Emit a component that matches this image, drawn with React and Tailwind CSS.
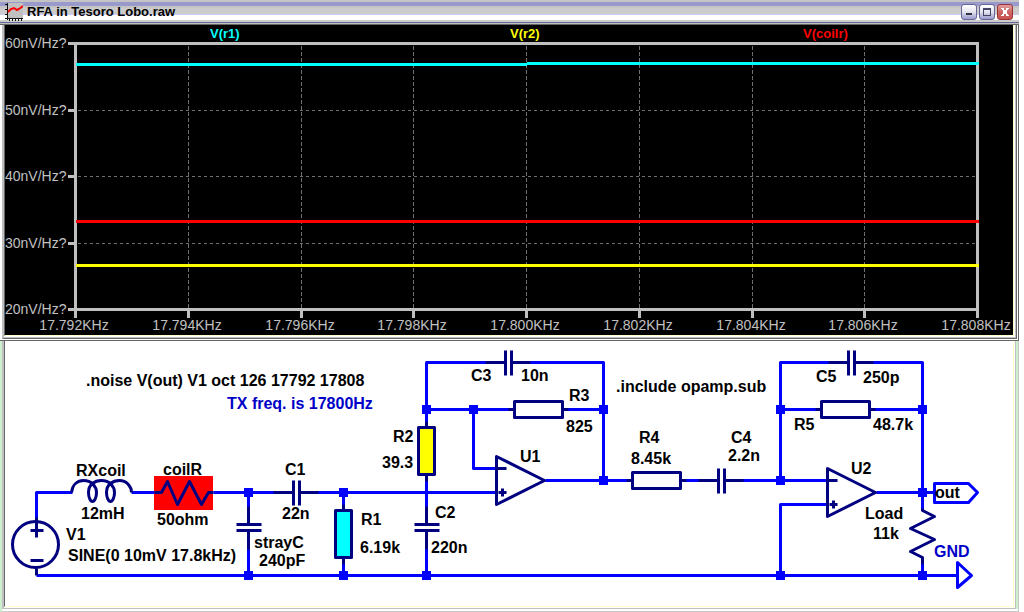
import clsx from 'clsx'

const yTicks = [
  { y: 43, label: '60nV/Hz?' },
  { y: 110, label: '50nV/Hz?' },
  { y: 176, label: '40nV/Hz?' },
  { y: 243, label: '30nV/Hz?' },
  { y: 309, label: '20nV/Hz?' },
]

const xTicks = [
  { x: 75, label: '17.792KHz' },
  { x: 188, label: '17.794KHz' },
  { x: 301, label: '17.796KHz' },
  { x: 413, label: '17.798KHz' },
  { x: 526, label: '17.800KHz' },
  { x: 639, label: '17.802KHz' },
  { x: 752, label: '17.804KHz' },
  { x: 864, label: '17.806KHz' },
  { x: 977, label: '17.808KHz' },
]

const traces = [
  { name: 'V(r1)', x: 210, color: '#00ffff', d: 'M75 64H526M526 63H978' },
  { name: 'V(r2)', x: 510, color: '#ffff00', d: 'M75 265H978' },
  { name: 'V(coilr)', x: 803, color: '#ff0000', d: 'M75 221H978' },
]

const wires = [
  'M36 520V492H72',
  'M131 492H154M213 492H275M314 492H496',
  'M36 575H957',
  'M248 492V509M248 546V575',
  'M343 492V506M343 562V575',
  'M426 423V362H489M526 362H603V480',
  'M426 479V509M426 546V575',
  'M426 409H510M566 409H603',
  'M473 409V468H496',
  'M545 480H629M684 480H702M739 480H827',
  'M780 480V362H832M869 362H922V510',
  'M780 409H817M873 409H922',
  'M827 504H780V575',
  'M876 492H934M922 562V575',
]

const junctions = [
  [248, 492], [343, 492], [248, 575], [343, 575], [426, 575],
  [426, 409], [473, 409], [603, 409], [603, 480],
  [780, 409], [780, 480], [780, 575],
  [922, 409], [922, 492], [922, 575],
]

const labels = [
  { x: 86, y: 386, text: '.noise V(out) V1 oct 126 17792 17808' },
  { x: 227, y: 409, text: 'TX freq. is 17800Hz', blue: true },
  { x: 616, y: 392, text: '.include opamp.sub' },
  { x: 76, y: 476, text: 'RXcoil' },
  { x: 81, y: 519, text: '12mH' },
  { x: 163, y: 475, text: 'coilR' },
  { x: 157, y: 525, text: '50ohm' },
  { x: 66, y: 540, text: 'V1' },
  { x: 68, y: 561, text: 'SINE(0 10mV 17.8kHz)' },
  { x: 285, y: 475, text: 'C1' },
  { x: 282, y: 519, text: '22n' },
  { x: 254, y: 548, text: 'strayC' },
  { x: 259, y: 566, text: '240pF' },
  { x: 361, y: 525, text: 'R1' },
  { x: 360, y: 553, text: '6.19k' },
  { x: 393, y: 442, text: 'R2' },
  { x: 382, y: 468, text: '39.3' },
  { x: 435, y: 518, text: 'C2' },
  { x: 431, y: 553, text: '220n' },
  { x: 471, y: 381, text: 'C3' },
  { x: 521, y: 381, text: '10n' },
  { x: 569, y: 401, text: 'R3' },
  { x: 566, y: 432, text: '825' },
  { x: 520, y: 462, text: 'U1' },
  { x: 639, y: 443, text: 'R4' },
  { x: 631, y: 464, text: '8.45k' },
  { x: 731, y: 443, text: 'C4' },
  { x: 728, y: 461, text: '2.2n' },
  { x: 816, y: 382, text: 'C5' },
  { x: 863, y: 383, text: '250p' },
  { x: 794, y: 430, text: 'R5' },
  { x: 873, y: 430, text: '48.7k' },
  { x: 851, y: 474, text: 'U2' },
  { x: 865, y: 519, text: 'Load' },
  { x: 873, y: 539, text: '11k' },
  { x: 935, y: 498, text: 'out' },
  { x: 934, y: 557, text: 'GND', blue: true },
]

function WindowButton({ label, close, children }) {
  return (
    <button
      type="button"
      aria-label={label}
      className={clsx(
        'size-4 rounded-[3px] border bg-linear-to-b',
        close
          ? 'border-[#993333] from-[#e0a0a0] via-[#cc6666] to-[#cc5050]'
          : 'border-[#666699] from-white via-[#e4e4f0] to-[#9999cc]'
      )}
    >
      <svg viewBox="0 0 14 14" className="block w-full" shapeRendering="crispEdges">
        {children}
      </svg>
    </button>
  )
}

function TitleBar() {
  return (
    <header className="flex h-[25px] items-start justify-between pr-[6px] pl-[5px] bg-[linear-gradient(#c4c4c4_0_2px,#9999cc_2px_6px,#c4c4c4_6px_8px,#cccccc_8px_14px,#ccccff_14px_15px,#ffffff_15px_20px,#cccccc_20px_22px,#666699_22px_23px,#c0c0c0_23px_24px,#666666_24px_25px)]">
      <div className="flex items-start gap-1">
        <svg viewBox="0 0 18 18" className="mt-[3px] size-[18px]" aria-hidden="true">
          <path d="M3 0H18V15H3z" fill="#c0c0c0" />
          <path d="M2 0V17M0 1H3M0 6H3M0 11H3M0 15H18M4 15V18M7 15V18M10 15V18M13 15V18M16 15V18" stroke="#111" strokeWidth="1" shapeRendering="crispEdges" />
          <path d="M3 9L6 6L9 5L12 7L14 6L18 3" fill="none" stroke="#f00" strokeWidth="2" />
        </svg>
        <h1 className="mt-1 text-[13px] leading-4 font-bold text-black">RFA in Tesoro Lobo.raw</h1>
      </div>
      <div className="mt-1 flex gap-[2px]">
        <WindowButton label="Minimize">
          <path d="M4 8H10V10H4z" fill="#333344" />
        </WindowButton>
        <WindowButton label="Maximize">
          <path d="M3 3H11V11H3zM4 5V10H10V5z" fill="#444466" fillRule="evenodd" />
        </WindowButton>
        <WindowButton label="Close" close>
          <path d="M4 3L10 11M10 3L4 11" stroke="#fff" strokeWidth="2" />
        </WindowButton>
      </div>
    </header>
  )
}

function NoisePlot() {
  return (
    <svg viewBox="5 25 1008 310" className="block w-full bg-black" role="img" aria-label="Noise density plot">
      <g transform="translate(.5 .5)" fill="none" shapeRendering="crispEdges">
        {/* Grid */}
        <g stroke="#707070" strokeWidth="1">
          {yTicks.slice(1, -1).map((t) => (
            <path key={t.y} d={`M77 ${t.y}H977`} strokeDasharray="3 3" />
          ))}
          {xTicks.slice(1, -1).map((t) => (
            <path key={t.x} d={`M${t.x} 45V309`} strokeDasharray="4 2" />
          ))}
        </g>
        {/* Frame and ticks */}
        <g stroke="#c0c0c0" strokeWidth="3">
          <path d="M75 43H977V309H75z" />
          {yTicks.map((t) => <path key={t.y} d={`M67 ${t.y}H75`} />)}
          {xTicks.map((t) => <path key={t.x} d={`M${t.x} 309V317`} />)}
        </g>
        {traces.map((t) => <path key={t.name} d={t.d} stroke={t.color} strokeWidth="3" />)}
      </g>
      <g fill="#c0c0c0" fontSize="14">
        {yTicks.map((t) => <text key={t.y} x="5" y={t.y + 5}>{t.label}</text>)}
        {xTicks.map((t) => <text key={t.x} x={t.x - 1} y="330" textAnchor="middle">{t.label}</text>)}
      </g>
      <g fontSize="13" fontWeight="bold">
        {traces.map((t) => <text key={t.name} x={t.x} y="38" fill={t.color}>{t.name}</text>)}
      </g>
    </svg>
  )
}

// Two plates with a lead on each side, centred on x, y
function Capacitor({ x, y, vertical }) {
  return (
    <path
      d={vertical
        ? `M${x} ${y - 21}V${y - 3}M${x - 12} ${y - 3}H${x + 13}M${x - 12} ${y + 3}H${x + 13}M${x} ${y + 3}V${y + 22}`
        : `M${x - 23} ${y}H${x - 3}M${x - 3} ${y - 12}V${y + 13}M${x + 3} ${y - 12}V${y + 13}M${x + 3} ${y}H${x + 22}`}
    />
  )
}

function Resistor({ x, y, vertical, fill = '#fff' }) {
  return vertical ? (
    <g>
      <path d={`M${x} ${y - 30}V${y + 30}`} />
      <rect x={x - 8} y={y - 24} width="16" height="47" fill={fill} />
    </g>
  ) : (
    <g>
      <path d={`M${x - 30} ${y}H${x + 30}`} />
      <rect x={x - 24} y={y - 8} width="48" height="16" fill={fill} />
    </g>
  )
}

function OpAmp({ x, y }) {
  return (
    <g>
      <path d={`M${x} ${y - 24}V${y + 24}L${x + 48} ${y}z`} fill="#fff" />
      <path d={`M${x + 1} ${y - 12}H${x + 10}M${x + 2} ${y + 12}H${x + 10}M${x + 6} ${y + 8}V${y + 16}`} />
    </g>
  )
}

function Schematic() {
  return (
    <svg viewBox="5 341 1008 265" className="block w-full bg-white" role="img" aria-label="Amplifier schematic">
      <rect x="154" y="476" width="59" height="34" fill="#ff0000" />
      <g transform="translate(.5 .5)" fill="none" strokeWidth="3">
        <g stroke="#0000ff" strokeLinejoin="round">
          {wires.map((d) => <path key={d} d={d} />)}
          <path d="M934 483H968L977 492L968 502H934z" fill="#fff" />
          <path d="M957 562V587L971 575z" fill="#fff" />
        </g>
        <g stroke="#000080" strokeLinejoin="round">
          {/* V1 */}
          <circle cx="35" cy="544" r="23" />
          <path d="M36 517V537M30 530H43M30 560H43M36 568V575" />
          {/* RXcoil */}
          <path d="M71 492C72 484 77 480 83 480C91 480 96 486 96 492C96 497 94 501 92 501C90 501 88 497 88 492C88 484 94 480 101 480C109 480 114 486 114 492C114 497 112 501 110 501C108 501 106 497 106 492C106 484 112 480 119 480C126 480 131 486 131 492" />
          {/* coilR */}
          <path d="M154 492H161L167 481L177 504L189 481L201 504L208 492H213" />
          <Capacitor x={296} y={492} />
          <Capacitor x={248} y={527} vertical />
          <Capacitor x={426} y={527} vertical />
          <Capacitor x={508} y={362} />
          <Capacitor x={721} y={480} />
          <Capacitor x={851} y={362} />
          <Resistor x={343} y={534} vertical fill="#00ffff" />
          <Resistor x={426} y={451} vertical fill="#ffff00" />
          <Resistor x={538} y={409} />
          <Resistor x={656} y={480} />
          <Resistor x={845} y={409} />
          <OpAmp x={496} y={480} />
          <OpAmp x={827} y={492} />
          {/* Load */}
          <path d="M922 508V510L934 516L910 528L934 539L910 551L922 557V564" />
        </g>
        {junctions.map(([x, y]) => (
          <rect key={`${x}-${y}`} x={x - 4} y={y - 4} width="8" height="8" fill="#0000ff" stroke="#0000ff" strokeWidth="1" />
        ))}
      </g>
      <g fontSize="16" fontWeight="bold">
        {labels.map((l) => (
          <text key={l.text} x={l.x} y={l.y} fill={l.blue ? '#0000c8' : '#000'}>{l.text}</text>
        ))}
      </g>
    </svg>
  )
}

function App() {
  return (
    <main className="min-h-screen bg-white pr-[5px] font-['Liberation_Sans',Arial,sans-serif]">
      <section>
        <TitleBar />
        <div className="border-r border-b border-[#666666] pr-px pb-px pl-[2px]">
          <div className="border-r border-b border-l-2 border-r-[#666666] border-b-[#666666] border-l-[#c0c0c0]">
            <div className="border-r border-b border-[#c0c0c0] pr-px pb-px">
              <div className="border-r border-b border-l border-r-[#ffffcc] border-b-[#ffffcc] border-l-[#666666]">
                <NoisePlot />
              </div>
            </div>
          </div>
        </div>
      </section>
      <section className="border-r border-b border-l-2 border-r-[#c8c8c8] border-b-[#c8c8c8] border-l-[#ccf0cc] pb-[2px]">
        <div className="border-r-2 border-l border-r-[#ccf0cc] border-l-[#c0c0c0]">
          <div className="border-r border-b border-l border-r-[#c0c0c0] border-b-[#c0c0c0] border-l-[#c0c0c0] pr-px pb-px">
            <div className="border-r border-b border-l border-r-[#ffffcc] border-b-[#ffffcc] border-l-[#666666]">
              <Schematic />
            </div>
          </div>
        </div>
      </section>
    </main>
  )
}

export default App
